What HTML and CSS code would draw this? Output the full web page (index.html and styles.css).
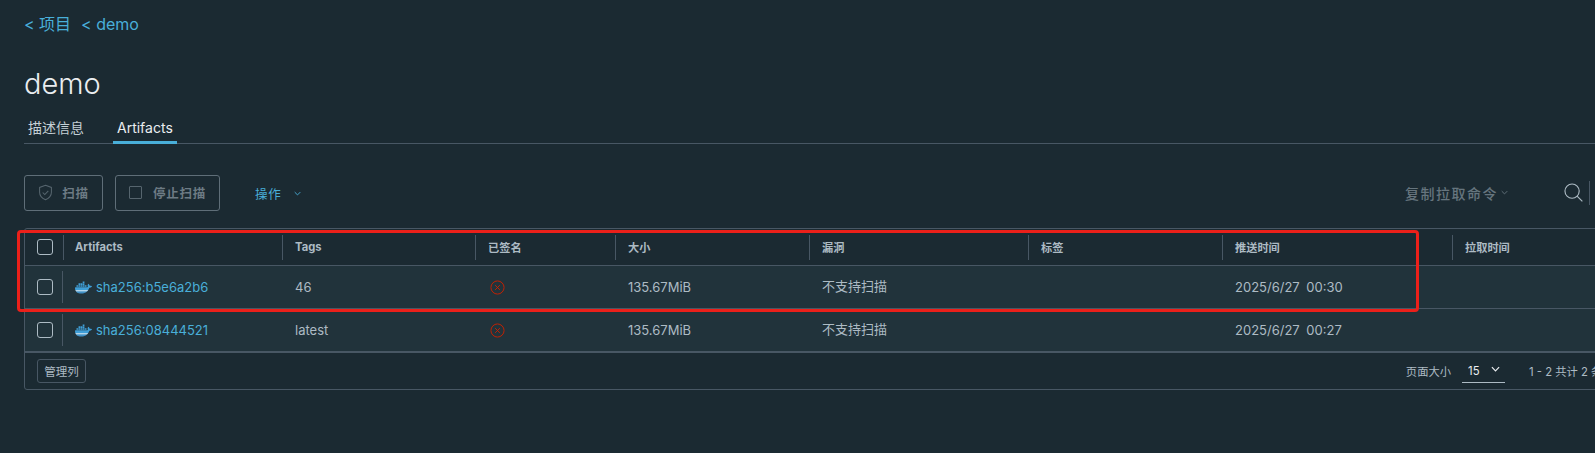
FILE: index.html
```html
<!DOCTYPE html>
<html lang="en">
<head>
    <meta charset="UTF-8">
    <meta name="viewport" content="width=device-width, initial-scale=1.0">
    <title>demo - Artifacts</title>
    <link rel="stylesheet" href="styles.css">
</head>
<body>
    <svg class="defs" width="0" height="0">
        <defs>
            <linearGradient id="whale" x1="0" y1="0" x2="0" y2="1">
                <stop offset="0.68" stop-color="#3f9fd8"/>
                <stop offset="0.74" stop-color="#b9d9ec"/>
                <stop offset="0.88" stop-color="#3f8fc4"/>
            </linearGradient>
        </defs>
        <symbol id="docker" viewBox="0 0 24 24"><path d="M13.983 11.078h2.119a.186.186 0 00.186-.185V9.006a.186.186 0 00-.186-.186h-2.119a.185.185 0 00-.185.185v1.888c0 .102.083.185.185.185m-2.954-5.43h2.118a.186.186 0 00.186-.186V3.574a.186.186 0 00-.186-.185h-2.118a.185.185 0 00-.185.185v1.888c0 .102.082.185.185.186m0 2.716h2.118a.187.187 0 00.186-.186V6.29a.186.186 0 00-.186-.185h-2.118a.185.185 0 00-.185.185v1.887c0 .102.082.185.185.186m-2.93 0h2.12a.186.186 0 00.184-.186V6.29a.185.185 0 00-.185-.185H8.1a.185.185 0 00-.185.185v1.887c0 .102.083.185.185.186m-2.964 0h2.119a.186.186 0 00.185-.186V6.29a.185.185 0 00-.185-.185H5.136a.186.186 0 00-.186.185v1.887c0 .102.084.185.186.186m5.893 2.715h2.118a.186.186 0 00.186-.185V9.006a.186.186 0 00-.186-.186h-2.118a.185.185 0 00-.185.185v1.888c0 .102.082.185.185.185m-2.93 0h2.12a.185.185 0 00.184-.185V9.006a.185.185 0 00-.184-.186h-2.12a.185.185 0 00-.184.185v1.888c0 .102.083.185.185.185m-2.964 0h2.119a.185.185 0 00.185-.185V9.006a.185.185 0 00-.184-.186h-2.12a.186.186 0 00-.186.186v1.887c0 .102.084.185.186.185m-2.92 0h2.12a.185.185 0 00.184-.185V9.006a.185.185 0 00-.184-.186h-2.12a.185.185 0 00-.184.185v1.888c0 .102.082.185.185.185M23.763 9.89c-.065-.051-.672-.51-1.954-.51-.338.001-.676.03-1.01.087-.248-1.7-1.653-2.53-1.716-2.566l-.344-.199-.226.327c-.284.438-.49.922-.612 1.43-.23.97-.09 1.882.403 2.661-.595.332-1.55.413-1.744.42H.751a.751.751 0 00-.75.748 11.376 11.376 0 00.692 4.062c.545 1.428 1.355 2.48 2.41 3.124 1.18.723 3.1 1.137 5.275 1.137.983.003 1.963-.086 2.93-.266a12.248 12.248 0 003.823-1.389c.98-.567 1.86-1.288 2.61-2.136 1.252-1.418 1.998-2.997 2.553-4.4h.221c1.372 0 2.215-.549 2.68-1.009.309-.293.55-.65.707-1.046l.098-.288Z"/></symbol>
        <symbol id="unsigned" viewBox="0 0 16 16"><circle cx="8" cy="8" r="7"/><path d="M5.500 5.500l5 5M10.500 5.500l-5 5"/></symbol>
        <symbol id="chevron" viewBox="0 0 10 6"><path d="M1 1l4 4 4-4"/></symbol>
    </svg>

    <div class="page">
        <nav class="breadcrumb">
            <a href="#">&lt; 项目</a>
            <a href="#">&lt; demo</a>
        </nav>

        <h1 class="title">demo</h1>

        <div class="tabs">
            <a class="tab" href="#">描述信息</a>
            <a class="tab active" href="#">Artifacts</a>
        </div>

        <div class="toolbar">
            <button class="btn btn-scan">
                <svg class="btn-icon" viewBox="0 0 16 18"><path d="M8 1.200l6.300 2.400v5c0 3.600-2.700 6.500-6.300 8.100C4.400 15.100 1.700 12.200 1.700 8.600v-5z"/><path d="M5 9l2.200 2.200L11 7.200"/></svg>
                扫描
            </button>
            <button class="btn btn-stop">
                <span class="stop-box"></span>
                停止扫描
            </button>
            <a class="actions" href="#">操作 <svg class="chevron"><use href="#chevron"/></svg></a>
            <div class="toolbar-right">
                <span class="copy-cmd">复制拉取命令 <svg class="chevron"><use href="#chevron"/></svg></span>
                <svg class="search" viewBox="0 0 20 20"><circle cx="8.500" cy="8.500" r="7.500"/><path d="M13.800 13.800l5.500 5.500"/></svg>
                <span class="tool-sep"></span>
            </div>
        </div>

        <div class="grid">
            <div class="row head">
                <div class="cell check"><span class="box"></span></div>
                <div class="cell">Artifacts</div>
                <div class="cell">Tags</div>
                <div class="cell">已签名</div>
                <div class="cell">大小</div>
                <div class="cell">漏洞</div>
                <div class="cell">标签</div>
                <div class="cell">推送时间</div>
                <div class="cell">拉取时间</div>
            </div>
            <div class="row body-row">
                <div class="cell check"><span class="box"></span></div>
                <div class="cell"><svg class="docker"><use href="#docker"/></svg><a class="link" href="#">sha256:b5e6a2b6</a></div>
                <div class="cell">46</div>
                <div class="cell"><svg class="unsigned"><use href="#unsigned"/></svg></div>
                <div class="cell">135.67MiB</div>
                <div class="cell scan">不支持扫描</div>
                <div class="cell"></div>
                <div class="cell date">2025/6/27 00:30</div>
                <div class="cell"></div>
            </div>
            <div class="row body-row last">
                <div class="cell check"><span class="box"></span></div>
                <div class="cell"><svg class="docker"><use href="#docker"/></svg><a class="link" href="#">sha256:08444521</a></div>
                <div class="cell">latest</div>
                <div class="cell"><svg class="unsigned"><use href="#unsigned"/></svg></div>
                <div class="cell">135.67MiB</div>
                <div class="cell scan">不支持扫描</div>
                <div class="cell"></div>
                <div class="cell date">2025/6/27 00:27</div>
                <div class="cell"></div>
            </div>
            <div class="footer">
                <button class="manage">管理列</button>
                <div class="pager">
                    <span>页面大小</span>
                    <span class="page-size">15 <svg class="chevron"><use href="#chevron"/></svg></span>
                    <span class="count">1 - 2 共计 2 条记录</span>
                </div>
            </div>
        </div>
    </div>

    <div class="highlight"></div>
</body>
</html>
```

FILE: styles.css
```css
html, body {
    height: 100%;
}
body {
    margin: 0;
    overflow: hidden;
    background-color: #1b2a32;
    color: #adbbc4;
    font-family: "Inter", "Noto Sans CJK SC", sans-serif;
    position: relative;
}
a {
    color: #49afd9;
    text-decoration: none;
}
.defs {
    position: absolute;
}
.page {
    width: 1640px;
    padding-left: 24px;
}

.breadcrumb {
    display: flex;
    gap: 10px;
    padding-top: 13px;
    height: 22px;
    line-height: 22px;
    font-size: 16px;
}
.title {
    margin: 28px 0 0;
    height: 42px;
    line-height: 42px;
    font-size: 29px;
    font-weight: 300;
    color: #eaedf0;
}

.tabs {
    display: flex;
    margin-top: 13px;
    height: 25px;
    border-bottom: 1px solid #485764;
}
.tab {
    height: 25px;
    line-height: 20px;
    box-sizing: border-box;
    padding: 0 4px;
    font-size: 14px;
    color: #c5d0d6;
}
.tab.active {
    height: 26px;
    margin-left: 25px;
    color: #eaedf0;
    border-bottom: 3px solid #49afd9;
}

.toolbar {
    display: flex;
    align-items: center;
    margin-top: 30px;
    height: 37px;
}
.btn {
    display: flex;
    align-items: center;
    justify-content: center;
    height: 36px;
    box-sizing: border-box;
    background: none;
    border: 1px solid #5f6e78;
    border-radius: 3px;
    color: #6d7b84;
    font-family: inherit;
    font-size: 12.500px;
    font-weight: 700;
    letter-spacing: 0.700px;
    padding: 0;
}
.btn-scan {
    width: 79px;
    gap: 9px;
}
.btn-stop {
    width: 105px;
    margin-left: 12px;
    gap: 11px;
}
.btn-icon {
    width: 15px;
    height: 17px;
    fill: none;
    stroke: #56656e;
    stroke-width: 1.100;
}
.stop-box {
    width: 11px;
    height: 11px;
    border: 1px solid #56656e;
    border-radius: 1px;
}
.actions {
    display: flex;
    align-items: center;
    gap: 13px;
    margin-left: 35px;
    padding-top: 2px;
    font-size: 12.500px;
    letter-spacing: 0.700px;
}
.chevron {
    width: 7px;
    height: 5px;
    fill: none;
    stroke: currentColor;
    stroke-width: 1.300;
}
.toolbar-right {
    display: flex;
    align-items: center;
    margin-left: auto;
    margin-right: 74px;
}
.copy-cmd {
    display: flex;
    align-items: center;
    gap: 3px;
    color: #66757e;
    font-size: 14px;
    font-weight: 500;
    letter-spacing: 1.500px;
    margin-right: 56px;
}
.search {
    width: 19px;
    height: 19px;
    fill: none;
    stroke: #adbbc4;
    stroke-width: 1.200;
}
.tool-sep {
    width: 1px;
    height: 24px;
    background: #485764;
    margin-left: 6px;
}

.grid {
    margin-top: 17px;
    border: 1px solid #485764;
    border-radius: 3px;
    font-size: 13px;
}
.row {
    display: grid;
    grid-template-columns: 39px 219px 193px 140px 194px 219px 194px 230px 1fr;
}
.cell {
    display: flex;
    align-items: center;
    padding-left: 12px;
    box-sizing: border-box;
    position: relative;
    min-width: 0;
}
.row .cell:nth-child(2) {
    padding-left: 11px;
}
.scan {
    padding-bottom: 3px;
}
.date {
    word-spacing: 3px;
}
.box {
    width: 14px;
    height: 14px;
    border: 1px solid #adbbc4;
    border-radius: 3px;
}
.head {
    height: 36px;
    border-bottom: 1px solid #485764;
    font-size: 11.200px;
    font-weight: 700;
    color: #adbbc4;
}
.head .cell:not(:last-child)::after {
    content: "";
    position: absolute;
    right: 0;
    top: 6px;
    bottom: 5px;
    width: 1px;
    background: #485764;
}
.body-row {
    height: 42px;
    background: #21333b;
    border-bottom: 1px solid #485764;
}
.body-row.last {
    border-bottom-width: 2px;
}
.body-row .check::after {
    content: "";
    position: absolute;
    right: 1px;
    top: 5px;
    bottom: 5px;
    width: 1px;
    background: #485764;
}
.docker {
    width: 17px;
    height: 17px;
    fill: url(#whale);
    margin-right: 4px;
}
.link {
    white-space: nowrap;
}
.unsigned {
    width: 15px;
    height: 15px;
    margin-left: 2px;
    fill: none;
    stroke: #c92100;
    stroke-width: 1;
}
.footer {
    display: flex;
    align-items: center;
    justify-content: space-between;
    height: 36px;
    padding: 0 12px;
}
.manage {
    height: 24px;
    width: 49px;
    padding: 0;
    background: none;
    border: 1px solid #485764;
    border-radius: 3px;
    color: #adbbc4;
    font-family: inherit;
    font-size: 11.500px;
}
.pager {
    display: flex;
    align-items: center;
    font-size: 11.300px;
    margin-right: 26px;
}
.page-size {
    display: flex;
    align-items: center;
    justify-content: space-between;
    width: 43px;
    height: 24px;
    box-sizing: border-box;
    margin-left: 11px;
    padding: 0 5px 0 6px;
    border-bottom: 1px solid #adbbc4;
    color: #eaedf0;
}
.page-size .chevron {
    width: 9px;
    height: 6px;
    margin-bottom: 4px;
}
.count {
    margin-left: 24px;
    font-size: 11.300px;
}

/* red annotation drawn over the screenshot */
.highlight {
    position: absolute;
    left: 17px;
    top: 230px;
    width: 1402px;
    height: 82px;
    box-sizing: border-box;
    border: 3px solid #ec201a;
    border-radius: 4px;
}
```
